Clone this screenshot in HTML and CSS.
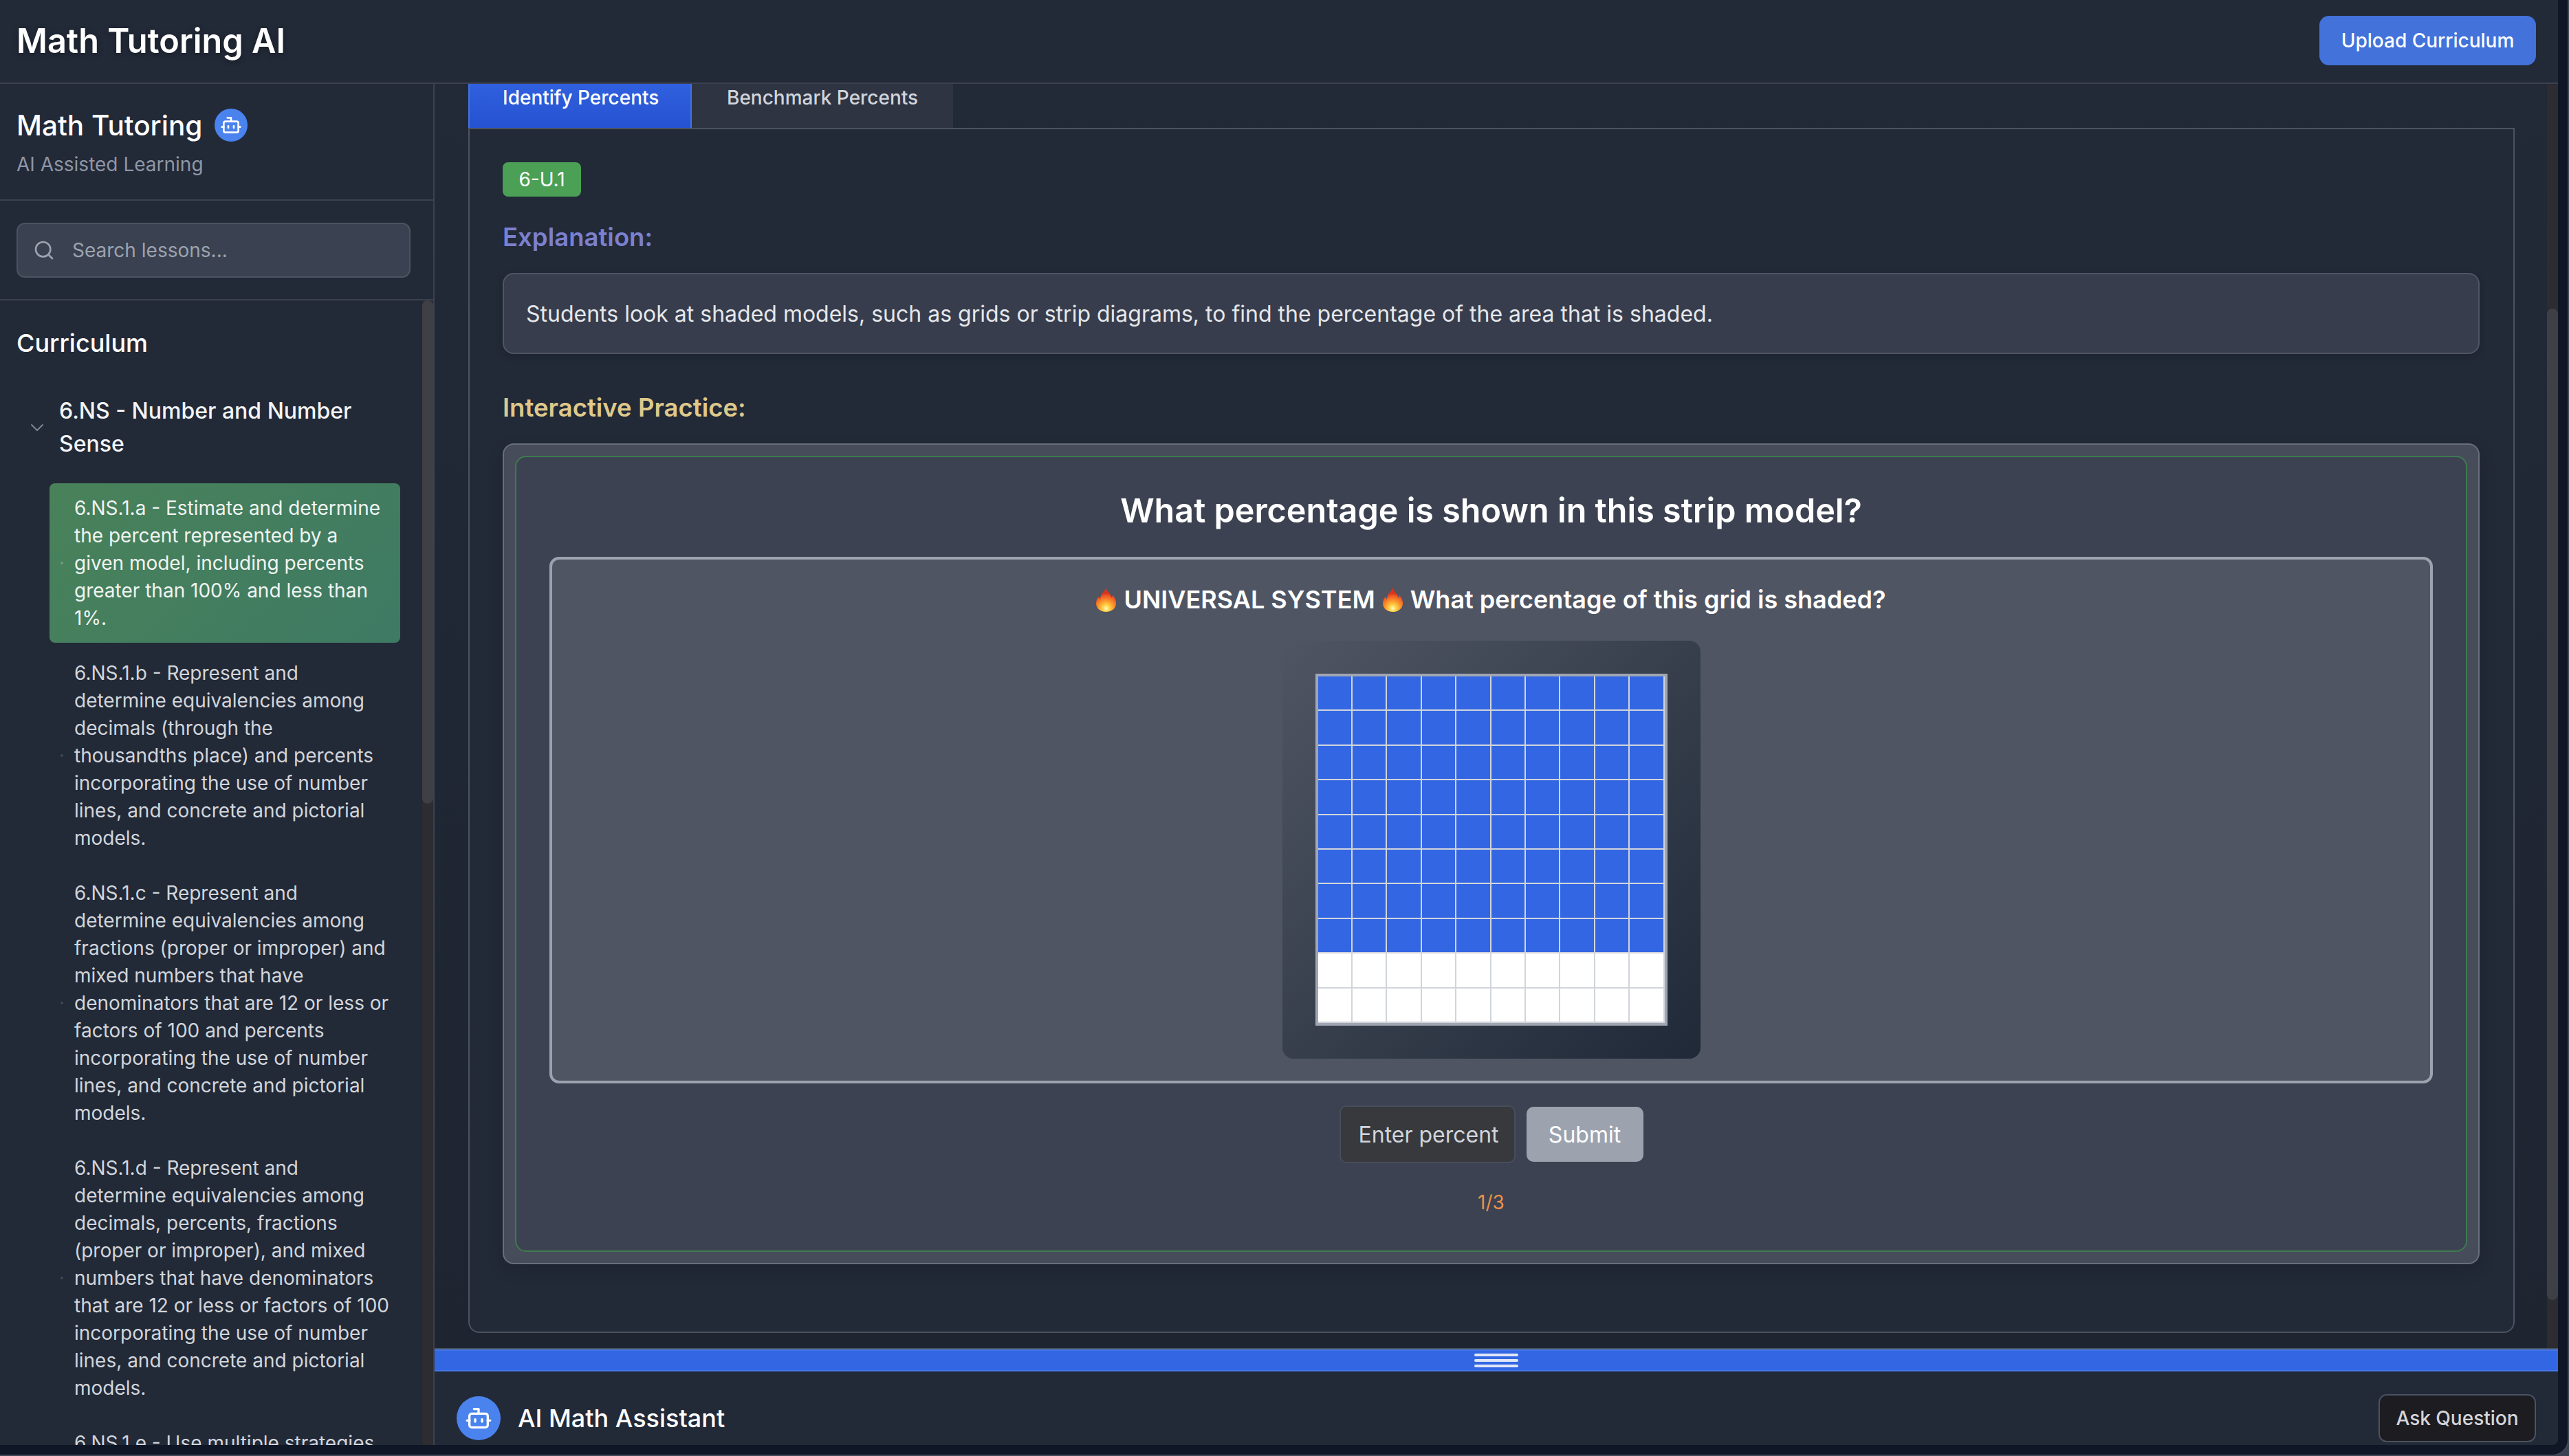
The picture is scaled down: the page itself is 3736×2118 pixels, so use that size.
FILE: index.html
```html
<!DOCTYPE html>
<html>
<head>
    <title>Math Tutoring AI</title>
    <link rel="stylesheet" href="styles.css">
</head>
<body>
<div class="window">
<div class="app">
    <header class="topbar">
        <h1>Math Tutoring AI</h1>
        <button class="upload-btn" type="button">Upload Curriculum</button>
    </header>

    <div class="layout">
        <aside class="sidebar">
            <div class="brand">
                <div class="brand-title">
                    <span>Math Tutoring</span>
                    <span class="bot-badge">
                        <svg width="32" height="32" viewBox="0 0 24 24" fill="none" stroke="currentColor" stroke-width="2" stroke-linecap="round" stroke-linejoin="round">
                            <path d="M12 8V4H8"/><rect x="4" y="8" width="16" height="12" rx="2"/><path d="M2 14h2"/><path d="M20 14h2"/><path d="M15 13v2"/><path d="M9 13v2"/>
                        </svg>
                    </span>
                </div>
                <p class="brand-sub">AI Assisted Learning</p>
            </div>

            <div class="search-wrap">
                <div class="search">
                    <svg width="32" height="32" viewBox="0 0 24 24" fill="none" stroke="currentColor" stroke-width="2" stroke-linecap="round" stroke-linejoin="round">
                        <circle cx="11" cy="11" r="8"/><path d="m21 21-4.3-4.3"/>
                    </svg>
                    <span>Search lessons...</span>
                </div>
            </div>

            <div class="lessons">
                <div class="lessons-inner">
                    <h2>Curriculum</h2>
                    <div class="group">
                        <svg width="32" height="32" viewBox="0 0 24 24" fill="none" stroke="currentColor" stroke-width="1.5" stroke-linecap="round" stroke-linejoin="round">
                            <path d="m6 9 6 6 6-6"/>
                        </svg>
                        <span>6.NS - Number and Number Sense</span>
                    </div>
                    <ul class="lesson-list">
                        <li class="lesson active"><i class="dot"></i><span>6.NS.1.a - Estimate and determine the percent represented by a given model, including percents greater than 100% and less than 1%.</span></li>
                        <li class="lesson"><i class="dot"></i><span>6.NS.1.b - Represent and determine equivalencies among decimals (through the thousandths place) and percents incorporating the use of number lines, and concrete and pictorial models.</span></li>
                        <li class="lesson"><i class="dot"></i><span>6.NS.1.c - Represent and determine equivalencies among fractions (proper or improper) and mixed numbers that have denominators that are 12 or less or factors of 100 and percents incorporating the use of number lines, and concrete and pictorial models.</span></li>
                        <li class="lesson"><i class="dot"></i><span>6.NS.1.d - Represent and determine equivalencies among decimals, percents, fractions (proper or improper), and mixed numbers that have denominators that are 12 or less or factors of 100 incorporating the use of number lines, and concrete and pictorial models.</span></li>
                        <li class="lesson"><i class="dot"></i><span>6.NS.1.e - Use multiple strategies to solve problems</span></li>
                    </ul>
                </div>
                <div class="track sidebar-track"><div class="thumb"></div></div>
            </div>
        </aside>

        <main class="main">
            <div class="content">
                <div class="content-scroll">
                    <div class="tabs">
                        <div class="tab active">Identify Percents</div>
                        <div class="tab">Benchmark Percents</div>
                    </div>
                    <section class="panel">
                        <span class="code-badge">6-U.1</span>
                        <h3 class="explain-title">Explanation:</h3>
                        <div class="explain-box">Students look at shaded models, such as grids or strip diagrams, to find the percentage of the area that is shaded.</div>
                        <h3 class="practice-title">Interactive Practice:</h3>

                        <div class="practice">
                            <div class="practice-inner">
                                <h2 class="question-title">What percentage is shown in this strip model?</h2>
                                <div class="question-box">
                                    <p class="question">
                                        <svg class="flame" width="29" height="36" viewBox="0 0 29 36"><use href="#flame"/></svg>
                                        UNIVERSAL SYSTEM
                                        <svg class="flame" width="29" height="36" viewBox="0 0 29 36"><use href="#flame"/></svg>
                                        What percentage of this grid is shaded?
                                    </p>
                                    <div class="grid-wrap">
                                        <div class="grid">
                                            <!-- 80 shaded, 20 empty -->
                                            <div class="on"></div><div class="on"></div><div class="on"></div><div class="on"></div><div class="on"></div><div class="on"></div><div class="on"></div><div class="on"></div><div class="on"></div><div class="on"></div>
                                            <div class="on"></div><div class="on"></div><div class="on"></div><div class="on"></div><div class="on"></div><div class="on"></div><div class="on"></div><div class="on"></div><div class="on"></div><div class="on"></div>
                                            <div class="on"></div><div class="on"></div><div class="on"></div><div class="on"></div><div class="on"></div><div class="on"></div><div class="on"></div><div class="on"></div><div class="on"></div><div class="on"></div>
                                            <div class="on"></div><div class="on"></div><div class="on"></div><div class="on"></div><div class="on"></div><div class="on"></div><div class="on"></div><div class="on"></div><div class="on"></div><div class="on"></div>
                                            <div class="on"></div><div class="on"></div><div class="on"></div><div class="on"></div><div class="on"></div><div class="on"></div><div class="on"></div><div class="on"></div><div class="on"></div><div class="on"></div>
                                            <div class="on"></div><div class="on"></div><div class="on"></div><div class="on"></div><div class="on"></div><div class="on"></div><div class="on"></div><div class="on"></div><div class="on"></div><div class="on"></div>
                                            <div class="on"></div><div class="on"></div><div class="on"></div><div class="on"></div><div class="on"></div><div class="on"></div><div class="on"></div><div class="on"></div><div class="on"></div><div class="on"></div>
                                            <div class="on"></div><div class="on"></div><div class="on"></div><div class="on"></div><div class="on"></div><div class="on"></div><div class="on"></div><div class="on"></div><div class="on"></div><div class="on"></div>
                                            <div></div><div></div><div></div><div></div><div></div><div></div><div></div><div></div><div></div><div></div>
                                            <div></div><div></div><div></div><div></div><div></div><div></div><div></div><div></div><div></div><div></div>
                                        </div>
                                    </div>
                                </div>
                                <div class="answer-row">
                                    <div class="answer-input">Enter percent</div>
                                    <button class="submit-btn" type="button">Submit</button>
                                </div>
                                <div class="progress">1/3</div>
                            </div>
                        </div>
                    </section>
                </div>
                <div class="track main-track"><div class="thumb"></div></div>
            </div>

            <div class="resizer">
                <span></span><span></span><span></span>
            </div>

            <div class="assistant">
                <div class="assistant-title">
                    <span class="bot-badge large">
                        <svg width="40" height="40" viewBox="0 0 24 24" fill="none" stroke="currentColor" stroke-width="2" stroke-linecap="round" stroke-linejoin="round">
                            <path d="M12 8V4H8"/><rect x="4" y="8" width="16" height="12" rx="2"/><path d="M2 14h2"/><path d="M20 14h2"/><path d="M15 13v2"/><path d="M9 13v2"/>
                        </svg>
                    </span>
                    <span>AI Math Assistant</span>
                </div>
                <button class="ask-btn" type="button">Ask Question</button>
            </div>
        </main>
    </div>
</div>
</div>

<svg class="defs" width="0" height="0">
    <defs>
        <radialGradient id="flameFill" gradientUnits="userSpaceOnUse" cx="14.500" cy="31" r="22">
            <stop offset="0" stop-color="#fff8d0"/>
            <stop offset="0.2" stop-color="#ffd84e"/>
            <stop offset="0.5" stop-color="#fb9a2b"/>
            <stop offset="0.85" stop-color="#ee5524"/>
            <stop offset="1" stop-color="#d8351c"/>
        </radialGradient>
        <g id="flame">
            <path fill="url(#flameFill)" d="M14 0c1 5 4 7 6.500 10.500 1 1.500 1.800 3.300 2 5 1-1 1.500-2.500 1.500-4 3 3 5 7 5 12 0 7.500-6 12.500-14.500 12.500S0 31 0 23.500c0-4.500 2-7.500 4-10 .2 1.800.8 3 2 4 .3-3 .9-5.500 3-8.500C11.500 6.500 14 4 14 0z"/>
        </g>
    </defs>
</svg>
</body>
</html>
```

FILE: styles.css
```css
* {
    box-sizing: border-box;
}
html, body {
    margin: 0;
    padding: 0;
    height: 100%;
    background: #3b4150;
}
body {
    font-family: Inter, "Noto Sans", sans-serif;
    color: #fff;
    overflow: hidden;
}
h1, h2, h3, p, ul {
    margin: 0;
    padding: 0;
}
button {
    font-family: inherit;
    cursor: pointer;
}
.defs {
    display: block;
}
.window {
    height: 2118px;
    padding: 0 14px 14px 0;
    background: #0f1626;
    border-right: 2px solid #414756;
    border-bottom: 2px solid #414756;
    border-bottom-right-radius: 24px;
}
.app {
    height: 100%;
    display: flex;
    flex-direction: column;
    background: #222937;
    border-bottom-right-radius: 8px;
    overflow: hidden;
}

/* top bar */
.topbar {
    height: 122px;
    flex: none;
    display: flex;
    align-items: center;
    justify-content: space-between;
    padding: 0 32px 2px 24px;
    border-bottom: 2px solid #3b4150;
}
.topbar h1 {
    font-size: 48.7px;
    font-weight: 600;
    text-shadow: 0 2px 8px rgba(0, 0, 0, 0.3);
}
.upload-btn {
    width: 315px;
    height: 72px;
    background: #4272da;
    color: #fff;
    border: none;
    border-radius: 14px;
    font-size: 28px;
    font-weight: 500;
}

.layout {
    flex: 1;
    display: flex;
    min-height: 0;
}

/* sidebar */
.sidebar {
    width: 632px;
    flex: none;
    display: flex;
    flex-direction: column;
    border-right: 2px solid #3b4150;
}
.brand {
    height: 170px;
    flex: none;
    padding: 36px 24px 0;
    border-bottom: 2px solid #3b4150;
}
.brand-title {
    display: flex;
    align-items: center;
    gap: 18px;
    height: 48px;
    font-size: 40.5px;
    font-weight: 500;
}
.bot-badge {
    width: 48px;
    height: 48px;
    flex: none;
    display: flex;
    align-items: center;
    justify-content: center;
    border-radius: 50%;
    background: #4a83ee;
    color: #fff;
}
.bot-badge.large {
    width: 64px;
    height: 64px;
}
.brand-sub {
    margin-top: 13px;
    font-size: 28px;
    line-height: 40px;
    color: #8f96a6;
}
.search-wrap {
    height: 145px;
    flex: none;
    padding: 32px 33px 0 24px;
    border-bottom: 2px solid #3b4150;
}
.search {
    height: 80px;
    display: flex;
    align-items: center;
    gap: 25px;
    padding: 0 22px;
    background: #3a4150;
    border: 2px solid #4b5261;
    border-radius: 12px;
    color: #9ca3af;
    font-size: 28px;
}
.lessons {
    flex: 1;
    min-height: 0;
    display: flex;
    overflow: hidden;
}
.lessons-inner {
    flex: 1;
    min-width: 0;
    padding: 38px 0 0;
    overflow: hidden;
}
.lessons-inner h2 {
    padding-left: 24px;
    font-size: 36px;
    line-height: 48px;
    font-weight: 500;
}
.group {
    margin-top: 51px;
    padding: 0 30px 0 38px;
    display: flex;
    align-items: center;
    gap: 16px;
    font-size: 32px;
    line-height: 48px;
    font-weight: 500;
    color: #f3f4f6;
}
.group svg {
    flex: none;
    color: #7d8494;
}
.lesson-list {
    list-style: none;
    margin: 33px 32px 0 72px;
}
.lesson {
    display: flex;
    align-items: center;
    gap: 16px;
    padding: 16px 14px 16px 16px;
    margin-bottom: 8px;
    border-radius: 8px;
    font-size: 28px;
    line-height: 40px;
    color: #d1d5db;
}
.lesson .dot {
    width: 4px;
    height: 4px;
    flex: none;
    border-radius: 50%;
    background: #3f4654;
}
.lesson.active {
    background: linear-gradient(135deg, #498259, #3e7a64);
    color: #f0f4f2;
}
.lesson.active .dot {
    background: #6d9a7f;
}

/* scrollbars */
.track {
    width: 16px;
    flex: none;
    background: #2c2c31;
}
.thumb {
    width: 16px;
    background: #3f3f46;
    border-radius: 8px;
}
.sidebar-track .thumb {
    height: 732px;
}
.main-track .thumb {
    height: 1442px;
    margin-top: 327px;
}

/* main */
.main {
    flex: 1;
    min-width: 0;
    display: flex;
    flex-direction: column;
}
.content {
    flex: 1;
    min-height: 0;
    display: flex;
    overflow: hidden;
    border-bottom: 2px solid #4b5563;
}
.content-scroll {
    flex: 1;
    min-width: 0;
    padding: 0 47px 0 49px;
    background: linear-gradient(#222937, #1e2531);
}
.tabs {
    display: flex;
    height: 64px;
}
.tab {
    padding: 0 51px;
    font-size: 28px;
    line-height: 40px;
    color: #d1d5db;
    background: #2e3442;
    font-weight: 500;
    white-space: nowrap;
}
.tab.active {
    width: 325px;
    padding: 0 0 0 48px;
    color: #fff;
    background: linear-gradient(#3060df, #2552d0);
    border-left: 2px solid #4272da;
    border-right: 2px solid #4272da;
}
.panel {
    height: 1753px;
    padding: 48px 49px 48px 48px;
    border: 2px solid #4b5261;
    border-radius: 0 0 16px 16px;
    background: #222937;
}
.code-badge {
    display: block;
    width: 114px;
    height: 50px;
    background: #4ba055;
    border-radius: 8px;
    text-align: center;
    font-size: 28px;
    line-height: 50px;
    font-weight: 400;
}
.explain-title, .practice-title {
    font-size: 36.5px;
    line-height: 48px;
    font-weight: 600;
}
.explain-title {
    margin-top: 35px;
    color: #7c81cf;
}
.explain-box {
    height: 118px;
    margin-top: 28px;
    padding: 0 32px;
    display: flex;
    align-items: center;
    background: #373d4c;
    border: 2px solid #4f5564;
    border-radius: 16px;
    font-size: 32px;
    color: #e5e7eb;
    box-shadow: 0 4px 12px rgba(0, 0, 0, 0.12);
}
.practice-title {
    margin-top: 54px;
    color: #dfc98a;
}

/* practice card */
.practice {
    margin-top: 28px;
    height: 1194px;
    padding: 16px;
    background: #464c59;
    border: 2px solid #686e7c;
    border-radius: 16px;
    box-shadow: 0 8px 24px rgba(0, 0, 0, 0.12);
}
.practice-inner {
    height: 100%;
    padding: 46px 48px 0;
    background: #3c4251;
    border: 2px solid #3f7a50;
    border-radius: 16px;
}
.question-title {
    text-align: center;
    font-size: 48.5px;
    line-height: 64px;
    font-weight: 600;
}
.question-box {
    margin-top: 35px;
    height: 766px;
    padding: 32px;
    background: #4f5563;
    border: 4px solid #9ca3af;
    border-radius: 14px;
    display: flex;
    flex-direction: column;
    align-items: center;
    gap: 34px;
}
.question {
    display: flex;
    align-items: center;
    justify-content: center;
    gap: 11px;
    font-size: 36px;
    line-height: 52px;
    font-weight: 600;
}
.grid-wrap {
    width: 608px;
    height: 608px;
    padding: 48px;
    background: linear-gradient(135deg, #4f5563, #1f2937);
    border-radius: 16px;
}
.grid {
    width: 512px;
    height: 512px;
    display: grid;
    grid-template-columns: repeat(10, 1fr);
    grid-template-rows: repeat(10, 1fr);
    border: 4px solid #a0a6b2;
}
.grid div {
    background: #fff;
    border-right: 2px solid #d1d5db;
    border-bottom: 2px solid #d1d5db;
}
.grid div.on {
    background: #3366e3;
}
.answer-row {
    margin-top: 32px;
    display: flex;
    justify-content: center;
    align-items: center;
    gap: 16px;
}
.answer-input {
    width: 256px;
    height: 84px;
    padding: 0 26px;
    display: flex;
    align-items: center;
    background: #38393d;
    border: 2px solid #474d5c;
    border-radius: 10px;
    font-size: 32px;
    color: #d1d5db;
    white-space: nowrap;
}
.submit-btn {
    width: 170px;
    height: 80px;
    background: #9ca3af;
    color: #fff;
    border: none;
    border-radius: 10px;
    font-size: 32px;
    font-weight: 400;
}
.progress {
    margin-top: 37px;
    text-align: center;
    font-size: 28px;
    line-height: 40px;
    color: #e8914a;
}

/* drag bar between lesson and chat */
.resizer {
    height: 32px;
    flex: none;
    display: flex;
    flex-direction: column;
    align-items: center;
    justify-content: center;
    gap: 4px;
    background: #3366e3;
    border-top: 2px solid #4478ea;
    border-bottom: 2px solid #4478ea;
}
.resizer span {
    width: 64px;
    height: 4px;
    border-radius: 2px;
    background: #dfe6f8;
}

/* assistant bar */
.assistant {
    flex: none;
    height: 107px;
    display: flex;
    align-items: center;
    justify-content: space-between;
    padding: 29px 32px 0;
}
.assistant-title {
    display: flex;
    align-items: center;
    gap: 25px;
    font-size: 36px;
    font-weight: 500;
}
.ask-btn {
    width: 229px;
    height: 70px;
    background: #1c1c21;
    color: #d4d4d8;
    border: 2px solid #4b5261;
    border-radius: 12px;
    font-size: 28px;
    font-weight: 500;
}
```
